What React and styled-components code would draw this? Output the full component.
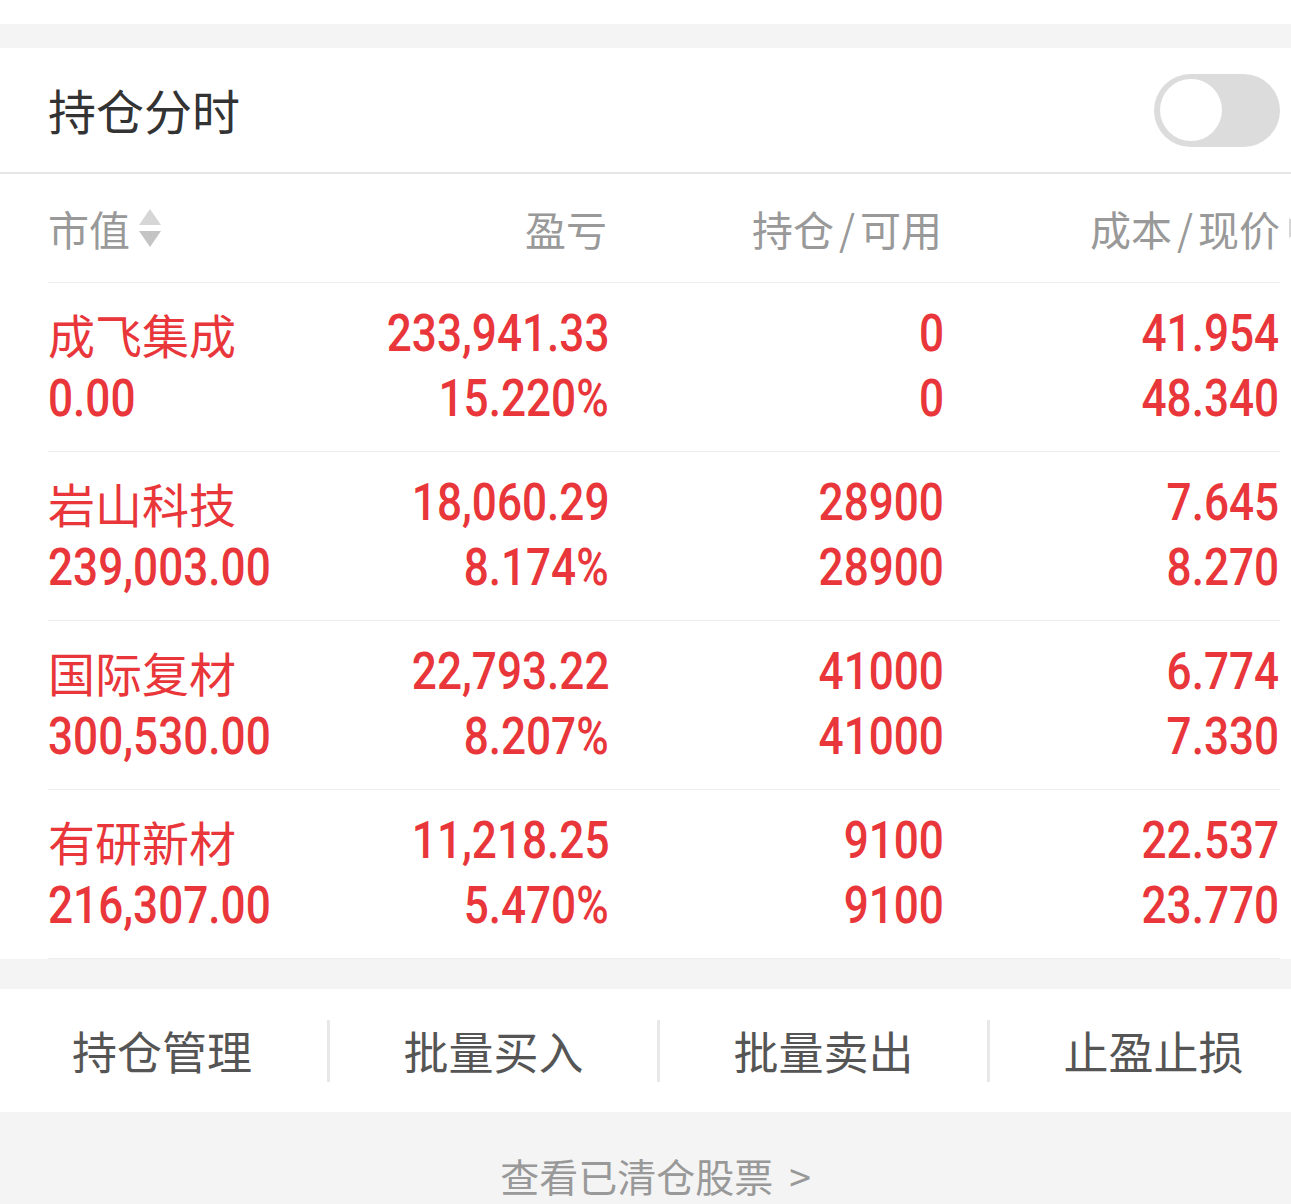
import styled, { createGlobalStyle } from "styled-components";

const GlobalStyle = createGlobalStyle`
  html, body {
    margin: 0;
    padding: 0;
    background: #f4f4f4;
    overflow: hidden;
  }
  body {
    font-family: "Noto Sans CJK SC", "Noto Sans", sans-serif;
  }
`;

const RED = "#e8363a";
const NUM_FONT = `"Roboto", "Noto Sans CJK SC", sans-serif`;

const holdings = [
  { name: "成飞集成", value: "0.00", pl: "233,941.33", rate: "15.220%", hold: "0", avail: "0", cost: "41.954", price: "48.340" },
  { name: "岩山科技", value: "239,003.00", pl: "18,060.29", rate: "8.174%", hold: "28900", avail: "28900", cost: "7.645", price: "8.270" },
  { name: "国际复材", value: "300,530.00", pl: "22,793.22", rate: "8.207%", hold: "41000", avail: "41000", cost: "6.774", price: "7.330" },
  { name: "有研新材", value: "216,307.00", pl: "11,218.25", rate: "5.470%", hold: "9100", avail: "9100", cost: "22.537", price: "23.770" },
];

const actions = ["持仓管理", "批量买入", "批量卖出", "止盈止损"];

function SortIcon() {
  return (
    <SortSvg width="24" height="40" viewBox="0 0 24 40">
      <path d="M12 1 L23 17 L1 17 Z" fill="#d6d6d6" />
      <path d="M12 39 L23 23 L1 23 Z" fill="#c4c4c4" />
    </SortSvg>
  );
}

function Toggle() {
  return (
    <Track>
      <Knob />
    </Track>
  );
}

export default function App() {
  return (
    <Page>
      <GlobalStyle />
      <TopStrip />
      <Gap />
      <Panel>
        <TitleBar>
          <Title>持仓分时</Title>
          <Toggle />
        </TitleBar>
        <Table>
          <HeadRow>
            <HeadCell>
              市值
              <SortIcon />
            </HeadCell>
            <HeadCell $right>盈亏</HeadCell>
            <HeadCell $right>
              持仓<Slash>/</Slash>可用
            </HeadCell>
            <HeadCell $right>
              成本<Slash>/</Slash>现价
              <Peek />
            </HeadCell>
          </HeadRow>
          {holdings.map((h) => (
            <Row key={h.name}>
              <Cell>
                <Name>{h.name}</Name>
                <Line>
                  <Num>{h.value}</Num>
                </Line>
              </Cell>
              <Cell $right>
                <Line>
                  <Num $right>{h.pl}</Num>
                </Line>
                <Line>
                  <Num $right>{h.rate}</Num>
                </Line>
              </Cell>
              <Cell $right>
                <Line>
                  <Num $right>{h.hold}</Num>
                </Line>
                <Line>
                  <Num $right>{h.avail}</Num>
                </Line>
              </Cell>
              <Cell $right>
                <Line>
                  <Num $right>{h.cost}</Num>
                </Line>
                <Line>
                  <Num $right>{h.price}</Num>
                </Line>
              </Cell>
            </Row>
          ))}
        </Table>
      </Panel>
      <Gap $h={30} />
      <ActionBar>
        {actions.map((a, i) => (
          <Action key={a} $first={i === 0}>
            {a}
          </Action>
        ))}
      </ActionBar>
      <Footer>
        查看已清仓股票<span>&gt;</span>
      </Footer>
    </Page>
  );
}

const Page = styled.div`
  width: 100%;
  min-height: 1204px;
  background: #f4f4f4;
`;

const TopStrip = styled.div`
  height: 24px;
  background: #fff;
`;

const Gap = styled.div`
  height: ${(p) => p.$h || 24}px;
  background: #f4f4f4;
`;

const Panel = styled.div`
  background: #fff;
`;

const TitleBar = styled.div`
  height: 124px;
  display: flex;
  align-items: center;
  justify-content: space-between;
  padding: 0 11px 0 48px;
  border-bottom: 2px solid #e6e6e6;
`;

const Title = styled.div`
  font-size: 48px;
  color: #333;
  line-height: 1;
  margin-top: -2px;
`;

const Track = styled.div`
  width: 126px;
  height: 73px;
  border-radius: 37px;
  background: #dcdcdc;
  display: flex;
  align-items: center;
  padding-left: 6px;
  box-sizing: border-box;
`;

const Knob = styled.div`
  width: 62px;
  height: 62px;
  border-radius: 50%;
  background: #fff;
`;

const Table = styled.div`
  margin: 0 11px 0 48px;
`;

const columns = `280px 279px 335px 1fr`;

const HeadRow = styled.div`
  display: grid;
  grid-template-columns: ${columns};
  height: 108px;
  align-items: center;
  border-bottom: 1px solid #ececec;
`;

const HeadCell = styled.div`
  position: relative;
  display: flex;
  align-items: center;
  justify-content: ${(p) => (p.$right ? "flex-end" : "flex-start")};
  font-size: 41px;
  color: #999;
  line-height: 1;
`;

const Slash = styled.span`
  margin: 0 5px;
`;

const SortSvg = styled.svg`
  margin-left: 8px;
`;

const Peek = styled.span`
  position: absolute;
  right: -23px;
  top: 50%;
  margin-top: -10px;
  width: 0;
  height: 0;
  border-top: 10px solid transparent;
  border-bottom: 10px solid transparent;
  border-left: 14px solid #d6d6d6;
`;

const Row = styled.div`
  display: grid;
  grid-template-columns: ${columns};
  padding: 18px 0 20px;
  border-bottom: 1px solid #ececec;
`;

const Cell = styled.div`
  display: flex;
  flex-direction: column;
  align-items: ${(p) => (p.$right ? "flex-end" : "flex-start")};

  &:last-child {
    padding-right: 3px;
  }
`;

const Name = styled.div`
  height: 65px;
  display: flex;
  align-items: center;
  font-size: 47px;
  color: ${RED};
`;

const Line = styled.div`
  height: 65px;
  display: flex;
  align-items: center;
`;

const Num = styled.span`
  display: inline-block;
  font-family: ${NUM_FONT};
  font-size: 51px;
  font-weight: 500;
  line-height: 1;
  color: ${RED};
  transform: scaleX(0.865);
  transform-origin: ${(p) => (p.$right ? "right" : "left")} center;
  margin-right: ${(p) => (p.$right ? "-2px" : "0")};
`;

const ActionBar = styled.div`
  width: 1320px;
  height: 123px;
  display: grid;
  grid-template-columns: repeat(4, 330px);
  align-items: center;
  background: #fff;
  margin-left: -3px;
`;

const Action = styled.div`
  height: 62px;
  display: flex;
  align-items: center;
  justify-content: center;
  font-size: 45px;
  color: #555;
  border-left: ${(p) => (p.$first ? "none" : "3px solid #e8e8e8")};
  box-sizing: border-box;
`;

const Footer = styled.div`
  padding: 40px 0 0 20px;
  height: 91px;
  box-sizing: border-box;
  text-align: center;
  font-size: 39px;
  line-height: 46px;
  color: #999;

  span {
    margin-left: 16px;
  }
`;
